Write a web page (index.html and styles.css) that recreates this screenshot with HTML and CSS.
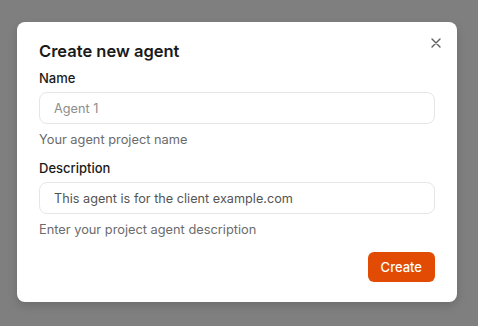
FILE: index.html
```html
<!DOCTYPE html>
<html lang="en">
<head>
    <meta charset="UTF-8">
    <meta name="viewport" content="width=device-width, initial-scale=1.0">
    <title>Create new agent</title>
    <link rel="stylesheet" href="styles.css">
</head>
<body>
    <div class="modal">
        <button class="close" aria-label="Close">
            <svg width="10" height="10" viewBox="0 0 10 10">
                <path d="M1 1L9 9M9 1L1 9" stroke="#5f5f5f" stroke-width="1.4" stroke-linecap="round"/>
            </svg>
        </button>
        <h2 class="title">Create new agent</h2>

        <div class="field">
            <label for="name">Name</label>
            <input id="name" type="text" placeholder="Agent 1">
            <p class="hint">Your agent project name</p>
        </div>

        <div class="field">
            <label for="desc">Description</label>
            <input id="desc" type="text" value="This agent is for the client example.com">
            <p class="hint">Enter your project agent description</p>
        </div>

        <div class="actions">
            <button class="primary">Create</button>
        </div>
    </div>
</body>
</html>
```

FILE: styles.css
```css
* {
    margin: 0;
    padding: 0;
    box-sizing: border-box;
}

body {
    font-family: Inter, "Noto Sans", sans-serif;
    background-color: #7f7f7f;
    padding: 22px 0 0 17px;
    height: 100vh;
}

.modal {
    position: relative;
    width: 440px;
    height: 280px;
    background-color: #fff;
    border-radius: 8px;
    padding: 17px 22px 20px;
    box-shadow: 0 4px 10px rgba(0, 0, 0, 0.15);
}

.close {
    position: absolute;
    top: 16px;
    right: 16px;
    width: 10px;
    height: 10px;
    border: none;
    background: none;
    display: flex;
    cursor: pointer;
}

.title {
    font-size: 16.5px;
    font-weight: 600;
    line-height: 24px;
    color: #1a1a1a;
    margin-bottom: 5px;
}

.field {
    display: flex;
    flex-direction: column;
}

.field + .field {
    margin-top: 8px;
}

.field label {
    font-size: 13px;
    font-weight: 500;
    line-height: 20px;
    color: #1a1a1a;
    margin-bottom: 4px;
}

.field input {
    height: 32px;
    border: 1px solid #e6e6e6;
    border-radius: 8px;
    padding: 0 14px;
    font-family: inherit;
    font-size: 12.7px;
    color: #555;
    outline: none;
}

.field input::placeholder {
    color: #8d8d8d;
}

.hint {
    font-size: 12.8px;
    line-height: 20px;
    color: #6b6b6b;
    margin-top: 6px;
}

.actions {
    display: flex;
    justify-content: flex-end;
    margin-top: 12px;
}

.primary {
    height: 30px;
    padding: 0 13px;
    border: none;
    border-radius: 6px;
    background-color: #e24b03;
    color: #fff;
    font-family: inherit;
    font-size: 13px;
    font-weight: 500;
    cursor: pointer;
}
```
